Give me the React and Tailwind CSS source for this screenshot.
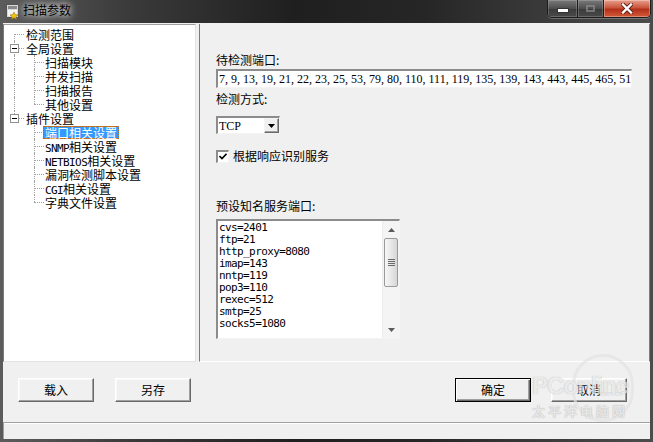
import React from 'react';

const services = ['cvs=2401', 'ftp=21', 'http_proxy=8080', 'imap=143', 'nntp=119', 'pop3=110', 'rexec=512', 'smtp=25', 'socks5=1080'];

const treeItems = [
  { label: '检测范围', level: 0, line: 'first' },
  { label: '全局设置', level: 0, line: 'mid', box: true },
  { label: '扫描模块', level: 1, line: 'mid', outer: true },
  { label: '并发扫描', level: 1, line: 'mid', outer: true },
  { label: '扫描报告', level: 1, line: 'mid', outer: true },
  { label: '其他设置', level: 1, line: 'last', outer: true },
  { label: '插件设置', level: 0, line: 'last', box: true },
  { label: '端口相关设置', level: 1, line: 'mid', selected: true },
  { label: 'SNMP相关设置', level: 1, line: 'mid' },
  { label: 'NETBIOS相关设置', level: 1, line: 'mid' },
  { label: '漏洞检测脚本设置', level: 1, line: 'mid' },
  { label: 'CGI相关设置', level: 1, line: 'mid' },
  { label: '字典文件设置', level: 1, line: 'last' },
];

// latin runs are drawn half width, like the bitmap font in the dialog
function MixedText({ text }) {
  return text.split(/([A-Za-z]+)/).filter(Boolean).map((part, i) =>
    /[A-Za-z]/.test(part)
      ? <span key={i} className="font-['DejaVu_Sans_Mono',monospace] text-[11px] tracking-[-0.6px]">{part}</span>
      : <span key={i}>{part}</span>
  );
}

function TreeRow({ item }) {
  const x = item.level === 0 ? 'left-[10px]' : 'left-[30px]';
  const vert = item.line === 'first' ? 'top-[7px] bottom-0' : item.line === 'last' ? 'top-0 h-[7px]' : 'top-0 bottom-0';
  return (
    <div className={`relative h-[14px] flex items-center ${item.level === 0 ? 'pl-[20px]' : 'pl-[39px]'}`}>
      {item.outer && <span className="absolute left-[10px] top-0 bottom-0 border-l border-dotted border-[#a0a0a0]" />}
      <span className={`absolute ${x} ${vert} border-l border-dotted border-[#a0a0a0]`} />
      <span className={`absolute ${x} top-[7px] w-[10px] border-t border-dotted border-[#a0a0a0]`} />
      {item.box && (
        <span className="absolute left-[6px] top-[3px] w-[9px] h-[9px] border border-[#919191] bg-white">
          <span className="absolute left-[1px] top-[3px] w-[5px] h-px bg-black" />
        </span>
      )}
      <span
        className={`relative px-px h-[13px] leading-[12px] border whitespace-nowrap ${
          item.selected ? 'bg-[#3399ff] text-white border-dotted border-[#b86a1c]' : 'border-transparent text-black'
        }`}
      >
        <MixedText text={item.label} />
      </span>
    </div>
  );
}

function AppIcon() {
  return (
    <svg width="16" height="17" viewBox="0 0 16 17">
      <rect x="1.5" y="1.5" width="12" height="13" fill="#d8d8d8" stroke="#555" />
      <rect x="3" y="3" width="9" height="3" fill="#8a8a8a" />
      <rect x="3" y="7" width="9" height="6" fill="#f4f4f4" />
      <path d="M9 9 L10.2 11.6 L13 12 L10.8 13.6 L11.5 16.4 L9 14.8 L6.5 16.4 L7.2 13.6 L5 12 L7.8 11.6 Z" fill="#f2c511" stroke="#8a6a00" strokeWidth="0.5" />
    </svg>
  );
}

function CaptionButtons() {
  return (
    <div className="ml-auto mr-[2px] flex h-[18px] border border-t-0 border-[#1c1c1c] rounded-b-[5px] overflow-hidden shadow-[0_1px_0_rgba(255,255,255,0.25)]">
      <div className="w-[29px] flex items-end justify-center pb-[4px] bg-[linear-gradient(180deg,#7a7a7a,#4e4e4e_50%,#3a3a3a_51%,#4a4a4a)] shadow-[inset_0_0_0_1px_rgba(255,255,255,0.18)]">
        <span className="w-[10px] h-[3px] bg-white border border-[#333] box-content" />
      </div>
      <div className="w-[26px] flex items-center justify-center border-l border-[#1c1c1c] bg-[linear-gradient(180deg,#7a7a7a,#4e4e4e_50%,#3a3a3a_51%,#4a4a4a)] shadow-[inset_0_0_0_1px_rgba(255,255,255,0.18)]">
        <span className="w-[9px] h-[7px] border-2 border-[#8c8c8c] opacity-70" />
      </div>
      <div className="w-[47px] flex items-center justify-center border-l border-[#1c1c1c] bg-[linear-gradient(180deg,#e8a08e,#c9553c_45%,#b3301a_55%,#d35a38)] shadow-[inset_0_0_0_1px_rgba(255,255,255,0.3)]">
        <svg width="12" height="11" viewBox="0 0 12 11">
          <path d="M2 1.5 L10 9.5 M10 1.5 L2 9.5" stroke="#5a1a10" strokeWidth="4" strokeLinecap="square" />
          <path d="M2 1.5 L10 9.5 M10 1.5 L2 9.5" stroke="#fff" strokeWidth="2.4" strokeLinecap="square" />
        </svg>
      </div>
    </div>
  );
}

function Button({ label, isDefault }) {
  return (
    <button
      className={`w-[76px] h-[24px] bg-[#f0f0f0] text-[12px] text-black leading-none border ${
        isDefault
          ? 'border-black shadow-[inset_1px_1px_0_#fff,inset_-1px_-1px_0_#696969,inset_-2px_-2px_0_#a0a0a0]'
          : 'border-t-white border-l-white border-r-[#696969] border-b-[#696969] shadow-[inset_-1px_-1px_0_#a0a0a0,inset_1px_1px_0_#f8f8f8]'
      }`}
    >
      {label}
    </button>
  );
}

function ScrollArrow({ down }) {
  return (
    <div className="h-[17px] flex items-center justify-center">
      <svg width="7" height="4" viewBox="0 0 7 4">
        <path d={down ? 'M0 0 H7 L3.5 4 Z' : 'M0 4 H7 L3.5 0 Z'} fill="#5a5a5a" />
      </svg>
    </div>
  );
}

export default function App() {
  return (
    <div className="relative w-[653px] h-[442px] overflow-hidden flex flex-col bg-[linear-gradient(90deg,#5c5c5c,#3a3a3a_20%,#1f1f1f_45%,#262626_65%,#3c3c3c_85%,#4c4c4c)] font-['Noto_Sans_CJK_SC','Noto_Sans',sans-serif] text-[12px]">
      {/* title bar */}
      <div className="h-[23px] flex items-start shrink-0">
        <div className="pl-[5px] pt-[3px]"><AppIcon /></div>
        <div className="ml-[2px] mt-[2px] leading-[16px] text-[12px] text-black [text-shadow:0_0_6px_#fff,0_0_10px_rgba(255,255,255,0.8)]">扫描参数</div>
        <CaptionButtons />
      </div>

      {/* client area */}
      <div className="mx-[3px] h-[416px] flex flex-col bg-[#f0f0f0] pt-px">
        <div className="h-[338px] flex gap-[3px]">
          {/* tree */}
          <div className="w-[193px] bg-white border border-t-[#a0a0a0] border-l-[#7a7a7a] border-r-[#e3e3e3] border-b-[#e3e3e3] pt-[2px]">
            {treeItems.map((item) => (
              <TreeRow key={item.label} item={item} />
            ))}
          </div>

          {/* settings panel */}
          <div className="flex-1 border-l border-l-[#7a7a7a] border-r border-r-[#808080] border-b border-b-white pl-[16px] pt-[29px] text-black">
            <div className="h-[14px] leading-[14px]">待检测端口:</div>
            <div className="mt-[2px] w-[416px] h-[19px] bg-white border-t-2 border-l-2 border-t-[#8c8c8c] border-l-[#8c8c8c] border-b border-r border-b-[#f4f4f4] border-r-[#f4f4f4] pl-px flex items-center overflow-hidden whitespace-nowrap font-['Liberation_Serif',serif] text-[12px] leading-none">
              7, 9, 13, 19, 21, 22, 23, 25, 53, 79, 80, 110, 111, 119, 135, 139, 143, 443, 445, 465, 51
            </div>

            <div className="mt-[4px] h-[14px] leading-[14px]">检测方式:</div>
            <div className="mt-[10px] w-[64px] h-[18px] bg-white border-t-2 border-l-2 border-t-[#8c8c8c] border-l-[#8c8c8c] border-b border-r border-b-[#f4f4f4] border-r-[#f4f4f4] flex items-center">
              <span className="flex-1 pl-px font-['Liberation_Serif',serif] text-[12px] leading-none">TCP</span>
              <span className="w-[15px] h-[15px] bg-[#f0f0f0] border border-t-[#f4f4f4] border-l-[#f4f4f4] border-r-[#696969] border-b-[#696969] shadow-[inset_-1px_-1px_0_#a0a0a0] flex items-center justify-center">
                <svg width="7" height="4" viewBox="0 0 7 4"><path d="M0 0 H7 L3.5 4 Z" fill="#000" /></svg>
              </span>
            </div>

            <div className="mt-[15px] h-[14px] flex items-center">
              <span className="w-[13px] h-[13px] bg-white border-t-2 border-l-2 border-t-[#8c8c8c] border-l-[#8c8c8c] border-b border-r border-b-[#f4f4f4] border-r-[#f4f4f4] flex items-center justify-center">
                <svg width="8" height="7" viewBox="0 0 8 7">
                  <path d="M0.5 3 L3 5.5 L7.5 0.8" stroke="#000" strokeWidth="1.6" fill="none" />
                </svg>
              </span>
              <span className="ml-[4px] leading-[14px]">根据响应识别服务</span>
            </div>

            <div className="mt-[36px] h-[14px] leading-[14px]">预设知名服务端口:</div>
            <div className="mt-[6px] w-[184px] h-[120px] flex bg-white border-t-2 border-l-2 border-t-[#8c8c8c] border-l-[#8c8c8c] border-b border-r border-b-[#f4f4f4] border-r-[#f4f4f4]">
              <div className="flex-1 pl-px pt-px font-['DejaVu_Sans_Mono',monospace] text-[11px] tracking-[-0.6px] leading-[12px] text-black">
                {services.map((s) => (
                  <div key={s} className="h-[12px]">{s}</div>
                ))}
              </div>
              <div className="w-[17px] flex flex-col bg-[#f4f4f4] border-l border-[#ececec]">
                <ScrollArrow />
                <div className="h-[49px] mx-px rounded-[2px] border border-[#9a9a9a] bg-[linear-gradient(90deg,#f6f6f6,#e8e8e8_50%,#d6d6d6)] flex flex-col items-center justify-center gap-[1px]">
                  <span className="w-[7px] h-px bg-[#6a6a6a]" />
                  <span className="w-[7px] h-px bg-[#6a6a6a]" />
                  <span className="w-[7px] h-px bg-[#6a6a6a]" />
                  <span className="w-[7px] h-px bg-[#6a6a6a]" />
                </div>
                <div className="flex-1" />
                <ScrollArrow down />
              </div>
            </div>
          </div>
        </div>

        {/* buttons */}
        <div className="h-[60px] flex items-start justify-between pt-[16px] pl-[15px] pr-[23px]">
          <div className="flex gap-[21px]">
            <Button label="载入" />
            <Button label="另存" />
          </div>
          <div className="flex gap-[20px]">
            <Button label="确定" isDefault />
            <Button label="取消" />
          </div>
        </div>

        {/* status strip */}
        <div className="flex-1 border-t border-t-[#a0a0a0] shadow-[inset_0_1px_0_#fff] border-l border-l-[#a0a0a0]" />
      </div>

      {/* watermark */}
      <div className="pointer-events-none absolute left-[530px] top-[352px] w-[105px] h-[75px] opacity-70">
        <div className="absolute left-[42px] top-[2px] w-[62px] h-[68px] rounded-full border-[3px] border-[#e4e4e4]" />
        <div className="absolute left-[2px] top-[22px] font-['Liberation_Sans',sans-serif] text-[24px] font-bold leading-none text-[#e8e8e8] [text-shadow:0_0_1px_#999] tracking-[-1px]">PConline</div>
        <div className="absolute left-[68px] top-[38px] font-['Liberation_Sans',sans-serif] text-[7px] leading-none text-[#cfcfcf]">.com.cn</div>
        <div className="absolute left-[2px] top-[52px] text-[13px] font-bold leading-none tracking-[3px] text-[#e4e4e4] [text-shadow:0_0_1px_#888]">太平洋电脑网</div>
      </div>
    </div>
  );
}
